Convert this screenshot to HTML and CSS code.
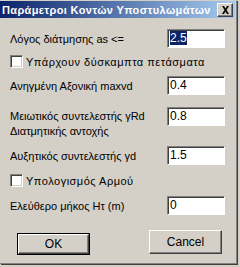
FILE: index.html
```html
<!DOCTYPE html>
<html>
<head>
<meta charset="utf-8">
<link rel="stylesheet" href="styles.css">
</head>
<body>
<div class="window">
  <div class="titlebar">
    <span class="title">Παράμετροι Κοντών Υποστυλωμάτων</span>
    <span class="close">
      <svg width="9" height="8" viewBox="0 0 9 8"><path d="M1 0h2l1.5 2.5L6 0h2L5.5 4 8 8H6L4.5 5.5 3 8H1l2.5-4z" fill="#000"/></svg>
    </span>
  </div>
  <div class="content">
    <div class="row r1">
      <span class="label">Λόγος διάτμησης as &lt;=</span>
      <span class="field"><span class="sel">2.5</span></span>
    </div>
    <div class="check c1">
      <span class="box"></span>
      <span class="clabel">Υπάρχουν δύσκαμπτα πετάσματα</span>
    </div>
    <div class="row r3">
      <span class="label">Ανηγμένη Αξονική maxvd</span>
      <span class="field">0.4</span>
    </div>
    <div class="row r4">
      <span class="label two">Μειωτικός συντελεστής γRd<br>Διατμητικής αντοχής</span>
      <span class="field">0.8</span>
    </div>
    <div class="row r5">
      <span class="label">Αυξητικός συντελεστής γd</span>
      <span class="field">1.5</span>
    </div>
    <div class="check c2">
      <span class="box"></span>
      <span class="clabel">Υπολογισμός Αρμού</span>
    </div>
    <div class="row r7">
      <span class="label">Ελεύθερο μήκος Ητ (m)</span>
      <span class="field">0</span>
    </div>
    <div class="buttons">
      <span class="btn ok"><span class="btn-in">OK</span></span>
      <span class="btn cancel">Cancel</span>
    </div>
  </div>
</div>
</body>
</html>
```

FILE: styles.css
```css
html, body {
  margin: 0;
  padding: 0;
  background: #d4d0c8;
}
body {
  width: 240px;
  height: 267px;
  overflow: hidden;
  font-family: "Liberation Sans", Arial, sans-serif;
  font-size: 12px;
  color: #000;
}
.window {
  width: 236px;
  height: 262px;
  background: #d4d0c8;
  border-top: 1px solid #d4d0c8;
  border-right: 1px solid #808080;
  border-bottom: 1px solid #808080;
  box-shadow: 1px 1px 0 #404040;
  display: flex;
  flex-direction: column;
}
.titlebar {
  height: 17px;
  margin-right: 1px;
  background: linear-gradient(to right, #0a246a, #a6caf0);
  display: flex;
  align-items: center;
  justify-content: space-between;
  padding-left: 2px;
}
.title {
  color: #fff;
  font-weight: bold;
  font-size: 11px;
  letter-spacing: 0.35px;
  white-space: nowrap;
}
.close {
  width: 14px;
  height: 12px;
  margin-right: 2px;
  background: #d4d0c8;
  border-top: 1px solid #fff;
  border-left: 1px solid #fff;
  border-right: 1px solid #404040;
  border-bottom: 1px solid #404040;
  box-shadow: inset -1px -1px 0 #808080;
  display: flex;
  align-items: center;
  justify-content: center;
}
.content {
  display: flex;
  flex-direction: column;
  padding-left: 10px;
}
.row {
  display: flex;
  align-items: center;
  justify-content: space-between;
  width: 215px;
}
.label {
  white-space: nowrap;
  font-size: 11px;
}
.clabel {
  white-space: nowrap;
  font-size: 11px;
  letter-spacing: 0.5px;
}
.two {
  line-height: 15px;
  margin-top: 2px;
}
.field {
  width: 54px;
  height: 16px;
  background: #fff;
  border-top: 1px solid #808080;
  border-left: 1px solid #808080;
  border-right: 1px solid #fff;
  border-bottom: 1px solid #fff;
  box-shadow: inset 1px 1px 0 #404040, 1px 1px 0 #d4d0c8;
  padding: 1px 0 0 2px;
  line-height: 15px;
  font-size: 12px;
}
.sel {
  background: #0a246a;
  color: #fff;
}
.r1 { margin-top: 11px; }
.c1 { margin-top: 7px; }
.r3 { margin-top: 8px; }
.r4 { margin-top: 12px; align-items: flex-start; }
.r5 { margin-top: 7px; }
.c2 { margin-top: 9px; }
.r7 { margin-top: 9px; }
.check {
  display: flex;
  align-items: center;
  height: 13px;
}
.box {
  width: 11px;
  height: 11px;
  background: #fff;
  border-top: 1px solid #808080;
  border-left: 1px solid #808080;
  border-right: 1px solid #fff;
  border-bottom: 1px solid #fff;
  box-shadow: inset 1px 1px 0 #404040, inset -1px -1px 0 #d4d0c8;
  margin-right: 3px;
}
.buttons {
  display: flex;
  align-items: flex-start;
  margin-top: 15px;
}
.btn {
  width: 73px;
  height: 22px;
  box-sizing: border-box;
  display: flex;
  align-items: center;
  justify-content: center;
  background: #d4d0c8;
}
.ok {
  margin-left: 7px;
  margin-top: 3px;
  border: 1px solid #000;
}
.ok .btn-in {
  width: 100%;
  height: 100%;
  box-sizing: border-box;
  display: flex;
  align-items: center;
  justify-content: center;
  border-top: 1px solid #fff;
  border-left: 1px solid #fff;
  border-right: 1px solid #404040;
  border-bottom: 1px solid #404040;
  box-shadow: inset -1px -1px 0 #808080;
}
.cancel {
  margin-left: 59px;
  height: 24px;
  border-top: 1px solid #fff;
  border-left: 1px solid #fff;
  border-right: 1px solid #404040;
  border-bottom: 1px solid #404040;
  box-shadow: inset -1px -1px 0 #808080;
}
```
